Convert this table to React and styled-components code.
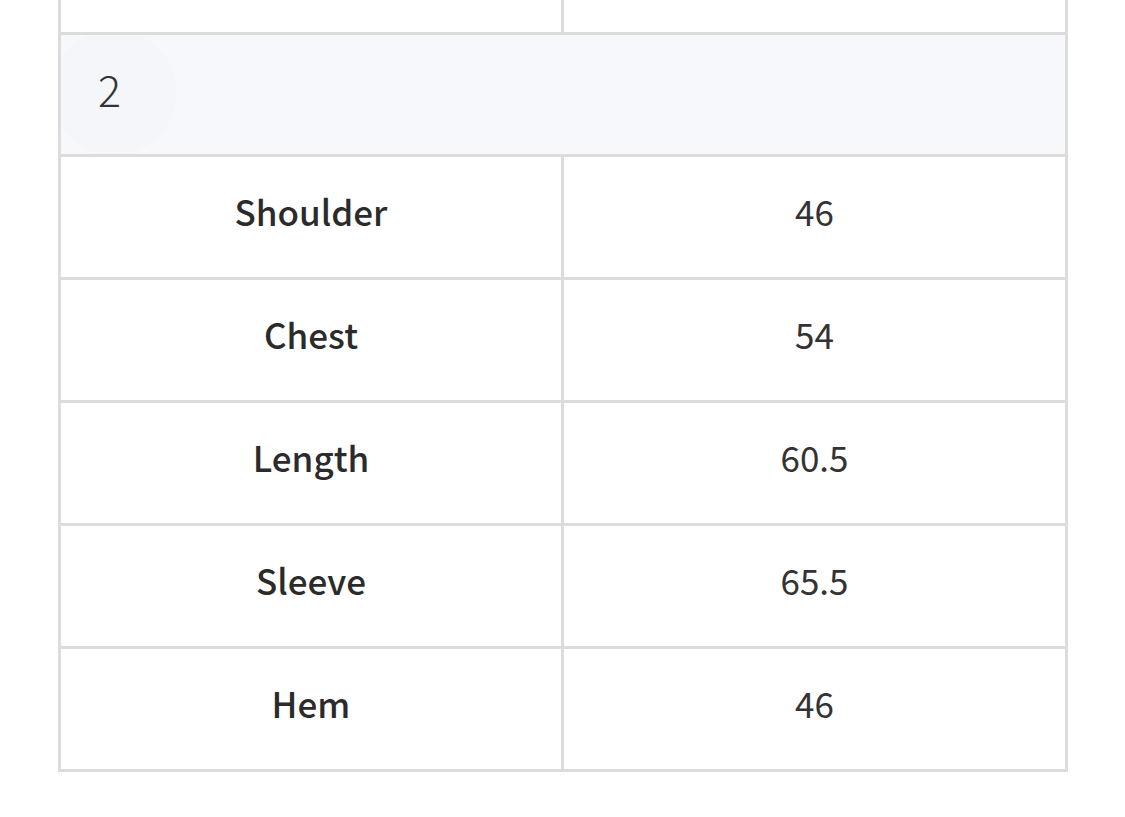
import React from 'react';
import styled, { createGlobalStyle } from 'styled-components';

const GlobalStyle = createGlobalStyle`
  html, body {
    margin: 0;
    padding: 0;
    background: #ffffff;
    font-family: "Noto Sans CJK KR", "Noto Sans", sans-serif;
    color: #333333;
  }
`;

const Page = styled.div`
  width: 1125px;
  height: 817px;
  overflow: hidden;
  padding: 0 58px;
  box-sizing: border-box;
`;

const Table = styled.table`
  width: 1007px;
  border-collapse: collapse;
  table-layout: fixed;
`;

const Cell = styled.td`
  border: 3px solid #dcdcdc;
  height: ${props => (props.$short ? '33px' : '123px')};
  padding: 0 0 12px;
  box-sizing: border-box;
  text-align: center;
  font-size: 35px;
  font-weight: ${props => (props.$label ? 500 : 400)};
  color: ${props => (props.$label ? '#2b2b2b' : '#333333')};
  border-top-width: ${props => (props.$short ? '0' : '3px')};
`;

const GroupCell = styled.td`
  border: 3px solid #dcdcdc;
  height: 122px;
  padding: 0 0 12px 37px;
  box-sizing: border-box;
  text-align: left;
  font-size: 43px;
  font-weight: 300;
  color: #333333;
  background:
    radial-gradient(circle at 52px 58px, #f4f6fa 0, #f4f6fa 62px, rgba(244, 246, 250, 0) 64px),
    #f7f8fb;
`;

const rows = [
  { label: 'Shoulder', value: '46' },
  { label: 'Chest', value: '54' },
  { label: 'Length', value: '60.5' },
  { label: 'Sleeve', value: '65.5' },
  { label: 'Hem', value: '46' },
];

const App = () => (
  <Page>
    <GlobalStyle />
    <Table>
      <colgroup>
        <col style={{ width: '503px' }} />
        <col style={{ width: '504px' }} />
      </colgroup>
      <tbody>
        <tr>
          <Cell $short />
          <Cell $short />
        </tr>
        <tr>
          <GroupCell colSpan={2}>2</GroupCell>
        </tr>
        {rows.map(row => (
          <tr key={row.label}>
            <Cell $label>{row.label}</Cell>
            <Cell>{row.value}</Cell>
          </tr>
        ))}
      </tbody>
    </Table>
  </Page>
);

export default App;
